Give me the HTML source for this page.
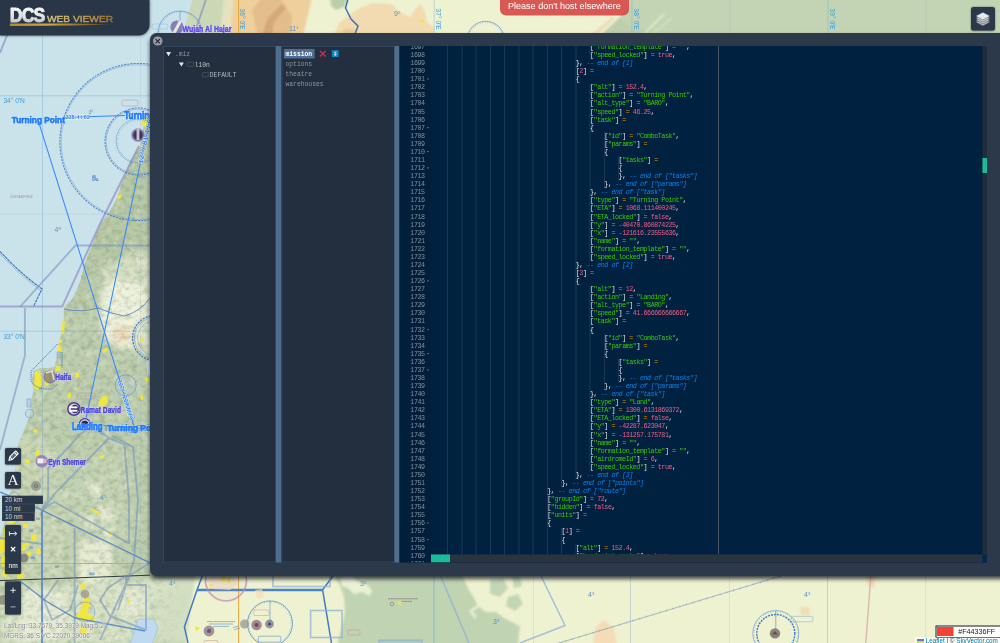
<!DOCTYPE html>
<html><head><meta charset="utf-8"><title>DCS Web Viewer</title>
<style>
*{box-sizing:border-box}
html,body{margin:0;padding:0}
#sc{position:absolute;left:0;top:0;width:2000px;height:1286px;transform:scale(.5);transform-origin:0 0}
#zm{position:absolute;left:0;top:0;width:2000px;height:1286px;overflow:hidden}
body{width:1000px;height:643px;overflow:hidden;position:relative;background:#cae3ea;font-family:"Liberation Sans",sans-serif}
#map{position:absolute;left:0;top:0;width:2000px;height:1286px}
.abs{position:absolute}
/* logo */
#logo{position:absolute;left:0;top:0;width:299.2px;height:71.2px;background:#283647;border-bottom-right-radius:22px;box-shadow:0 0 6px rgba(0,0,0,.45)}
#logo svg{position:absolute;left:0;top:0}
/* toast */
#toast{position:absolute;left:1000px;top:0;width:257.6px;height:30.8px;background:rgba(214,78,74,.93);border-radius:0 0 12px 12px;color:#fff;font-size:18.1px;line-height:24.8px;text-align:center;white-space:nowrap}
/* layers */
#layers{position:absolute;left:1942.4px;top:13.6px;width:47.6px;height:47px;background:#2a3849;border-radius:5px;box-shadow:0 0 4px rgba(0,0,0,.5)}
/* left controls */
.btn{position:absolute;left:10.4px;width:32px;background:#2a3849;border-radius:3px;box-shadow:0 0 4px rgba(0,0,0,.5);color:#fff}
.scale{position:absolute;left:3.8px;height:17.2px;background:#2a3849;color:#d8dce0;font-size:12.6px;line-height:16.8px;padding-left:5.2px;border:1px solid #3d4b5c;white-space:nowrap}
#coords{position:absolute;left:8px;top:1242px;font-size:12.84px;line-height:20px;color:#7d7d7d;text-shadow:0 0 2px #fff,0 0 2px #fff,0 0 4px #fff;white-space:nowrap}
/* modal */
#modal{position:absolute;left:300px;top:66px;width:1740px;height:1086px;background:#2b394a;border-radius:13px;box-shadow:0 6px 8px rgba(8,16,26,.78)}
#close svg,.btn svg,#layers svg,#files svg{display:block}
#close{position:absolute;left:6px;top:6.6px;width:18.8px;height:18.8px;border-radius:50%;background:#9b9ba3}
.panel{position:absolute;top:26px;height:1033px;background:#232f3e;border:2px solid #33465b}
#tree{left:26px;width:226px}
#files{left:263.2px;width:226.8px}
.split{position:absolute;top:26px;height:1033px;width:10.8px;background:#506e8e}
.mono{font-family:"Liberation Mono",monospace}
.tr{position:absolute;font-family:"Liberation Mono",monospace;font-size:12.7px;line-height:16px;color:#88929c;white-space:pre}
.fd{display:inline-block;width:11.2px;height:8.4px;border:1.2px solid #5a6673;border-radius:1.2px;vertical-align:-0.6px;margin-right:1.2px}
/* editor */
#ed{position:absolute;left:499.2px;top:26px;width:1174.8px;height:1033px;background:#002240;overflow:hidden;font-family:"Liberation Mono",monospace;font-size:13.4px;letter-spacing:-0.91px;line-height:16.15px;color:#e6eaf0}
#gut{position:absolute;left:0;top:0;width:63.2px;height:1033px;background:#011e3a;color:#8091a0;overflow:hidden}
.gl{position:absolute;left:0;width:50px;text-align:right;white-space:pre;height:16.15px}
.gl i{position:absolute;left:55px;top:6.2px;width:0;height:0;border-left:2.9px solid transparent;border-right:2.9px solid transparent;border-top:3.8px solid #76879a}
#code{position:absolute;left:0;top:0;width:1165.4px;height:1016.8px;overflow:hidden}
#gut{z-index:2}
.cl{position:absolute;white-space:pre;height:16.15px}
.ig{position:absolute;width:2px;background:rgba(255,255,255,.1)}
.k{color:#ee9205}.s{color:#37cb05}.n{color:#ee5d86}.c{color:#0682f2;font-style:italic}
#pm{position:absolute;left:636.6px;top:0;width:2px;height:1016.8px;background:#4d5560}
#vs{position:absolute;left:1165.4px;top:0;width:9.4px;height:1018.8px;background:#1f2d3d}
#vs b{position:absolute;left:0;top:224px;width:9.4px;height:30px;background:#1abc9c}
#hs{position:absolute;left:63.2px;top:1017.2px;width:1102.2px;height:15.8px;background:#29343f}
#hs b{position:absolute;left:0;top:0;width:37.6px;height:15.8px;background:#1abc9c}
#corner{position:absolute;left:1165.4px;top:1018.8px;width:9.4px;height:14.2px;background:#002a52}
/* bottom right */
#cp{position:absolute;left:1871.2px;top:1250.8px;width:132px;height:24.8px;background:#fff;border:2.4px solid #161616}
#cp b{position:absolute;left:1.2px;top:1.2px;width:32.4px;height:18px;background:#f44336}
#cp span{position:absolute;left:43.2px;top:0;font-size:14.3px;line-height:20.4px;color:#222}
#attr{position:absolute;left:1829px;top:1275.2px;width:172px;height:12px;background:rgba(255,255,255,.8);font-size:12.6px;line-height:14px;color:#333;white-space:nowrap;padding-left:5px;overflow:hidden}
#attr a{color:#0078a8;text-decoration:none}

</style></head>
<body>
<div id="sc">
<svg id="map" width="2000" height="1286" viewBox="0 0 1000 643">
<defs>
<filter id="b1" x="-5%" y="-5%" width="110%" height="110%"><feGaussianBlur stdDeviation="1.2"/></filter>
<filter id="b2" x="-10%" y="-10%" width="120%" height="120%"><feGaussianBlur stdDeviation="2.5"/></filter>
<filter id="b05" x="-5%" y="-5%" width="110%" height="110%"><feGaussianBlur stdDeviation=".5"/></filter>
<filter id="tex" x="0" y="0" width="100%" height="100%" color-interpolation-filters="sRGB"><feTurbulence type="fractalNoise" baseFrequency=".16 .2" numOctaves="3" seed="7"/><feColorMatrix type="matrix" values="0 0 0 0 .38  0 0 0 0 .47  0 0 0 0 .35  .7 0 0 0 -.3"/></filter>
<filter id="tex2" x="0" y="0" width="100%" height="100%" color-interpolation-filters="sRGB"><feTurbulence type="fractalNoise" baseFrequency=".14 .1" numOctaves="3" seed="21"/><feColorMatrix type="matrix" values="0 0 0 0 1  0 0 0 0 1  0 0 0 0 .9  .8 0 0 0 -.4"/></filter>
<linearGradient id="fade" gradientUnits="userSpaceOnUse" x1="140" y1="0" x2="190" y2="0"><stop offset="0" stop-color="#fff"/><stop offset="1" stop-color="#000"/></linearGradient><mask id="mk" maskUnits="userSpaceOnUse" x="0" y="0" width="200" height="643"><rect width="200" height="643" fill="url(#fade)"/></mask>
<clipPath id="cv"><rect width="1000" height="643"/></clipPath>
</defs>
<g clip-path="url(#cv)">
<!-- base land -->
<rect width="1000" height="643" fill="#bdcdae"/>

<!-- ===== terrain: left strip ===== -->
<g filter="url(#b2)">
<path d="M150 110 L150 250 L100 262 L84 300 L60 310 L100 220 L136 146Z" fill="#b7c8a6"/>
<path d="M104 270 L135 250 L150 255 L150 352 L132 352 L112 346 L98 330 L100 295Z" fill="#d6dec2"/>
<path d="M104 288 L114 280 L140 283 L148 300 L141 318 L139 345 L118 347 L105 338 L101 318Z" fill="#eef1dc"/>
<path d="M110 324 L132 324 L134 342 L116 344Z" fill="#efe6cc"/>
<path d="M116 330 L126 328 L128 340 L118 341Z" fill="#f0d8b4"/>
<path d="M60 470 L100 450 L128 456 L132 520 L120 585 L96 600 L74 580 L62 520Z" fill="#c3d2b2"/>
<path d="M88 484 L98 482 L104 492 L100 498 L92 494Z M96 505 L112 508 L116 520 L104 522Z M84 515 L96 518 L94 530 L86 528Z M104 524 L116 528 L112 540 L102 538Z M80 540 L110 542 L112 578 L96 590 L78 580Z" fill="#e6ebd2"/>
<path d="M0 576 L60 585 L150 580 L200 576 L200 643 L0 643Z" fill="#d9e2c6"/>
<path d="M20 430 L48 440 L62 480 L66 540 L60 590 L0 600 L0 540 L8 500 L14 470Z" fill="#c8d5b4"/>
<path d="M26 588 L60 590 L70 620 L56 643 L16 643 Z" fill="#e6ebd4"/><path d="M112 590 L140 586 L150 610 L132 618 L116 610Z" fill="#e2e9d0"/>
<path d="M150 600 L195 576 L205 600 L185 643 L150 643Z" fill="#d3dfc2"/>
</g>

<!-- ===== terrain: top strip ===== -->
<g filter="url(#b1)">
<path d="M193 -2 L230 -2 L224 36 L181 36Z" fill="#cbd8b6"/>
<path d="M224 -2 L240 -2 L236 36 L220 36Z" fill="#e6e2bd"/>
<path d="M234 -2 L314 -2 L304 36 L230 36Z" fill="#efcf9c"/>
<path d="M252 10 L262 -2 L280 -2 L292 16 L290 36 L258 36Z" fill="#e3bd8a"/><path d="M262 36 L268 18 L282 4 L286 8 L274 22 L272 36Z" fill="#d4a878"/>
<path d="M312 -2 L640 -2 L600 36 L303 36Z" fill="#eef2d0"/>
<path d="M330 -2 L348 -2 L344 7 L336 10 L331 6Z" fill="#bccfa8"/>
<path d="M333 36 L340 22 L358 9 L372 3 L392 4 L398 11 L410 17 L416 8 L421 4 L425 12 L427 22 L434 28 L434 36Z" fill="#f2dbb0"/>
<path d="M340 36 L346 28 L356 30 L354 36Z" fill="#eccb9a"/>
<path d="M629 -2 L1002 -2 L1002 36 L647 36 L651 28 L640 30 L629 26 L621 20 L622 12 L626 6Z" fill="#c2d4b3"/>
<path d="M644 34 L664 14" stroke="#e9efd2" stroke-width="1.6" fill="none"/><path d="M652 34 L672 18" stroke="#d9e4c4" stroke-width="1.2" fill="none"/>
<path d="M590 35 L612 17 L615 19 L596 36Z" fill="#ecdcb6"/>
</g>

<!-- ===== terrain: bottom strip ===== -->
<g filter="url(#b1)">
<path d="M196 574 L1002 574 L1002 645 L186 645 L190 610Z" fill="#eef2d0"/>
<path d="M334 574 L462 574 L468 588 L474 598 L478 606 L486 612 L496 612 L504 618 L512 622 L520 626 L518 645 L337 645 L342 626 L345 612 L344 598 L341 588Z" fill="#c1d4b2"/>
<path d="M340 577 L352 576 L358 582 L366 584 L372 590 L370 596 L362 592 L354 594 L348 588 L342 586Z" fill="#eaf0d4"/>
<path d="M490 580 L503 578 L508 588 L500 597 L490 594Z M508 597 L518 594 L523 604 L515 611 L506 606Z M512 576 L520 576 L522 586 L514 588Z" fill="#c3d5b4"/>
<path d="M478 606 L471 611 L475 617" fill="none" stroke="#eaf0d4" stroke-width="2.5" stroke-linecap="round"/>
<path d="M595 628 L604 620 L614 628 L617 645 L593 645Z" fill="#f4dcb6"/>
<path d="M866 576 L876 576 L874 588 L868 586Z" fill="#f3dbb4"/>
<path d="M800 607 L809 607 L810 615 L801 615Z" fill="#f3dbb4"/>
</g>

<g mask="url(#mk)"><rect width="200" height="643" filter="url(#tex)"/><rect width="200" height="643" filter="url(#tex2)"/></g>
<!-- sea -->
<path d="M-2 -2 L193 -2 L188 16 L183 34 L165 80 L150 118 L144 124 L140 146 L135.5 152 L130.6 160 L121 185 L117 198 L108 214 L99.5 225 L92 245 L84 265 L80 282 L73 298 L66 305 L63.8 309 L63.8 320 L61 335 L59 343 L58 352 L56 360 L54.4 367 L48 368 L40 368 L33.4 371 L32 380 L33.4 390 L31 405 L30 415 L24 430 L18.7 443 L16 455 L15.5 466 L13 480 L9 500 L5 520 L2 532 L-2 540Z" fill="#cae3ea" filter="url(#b05)"/>
<!-- lakes -->
<path d="M146.4 362 L150 358 L150 376 L147.4 374Z" fill="#cae3ea"/>
<path d="M138 619 L154 619 L158 628 L152 645 L130 645 L134 632Z" fill="#bfdaf0" stroke="#8fb4d8" stroke-width=".5"/>

<!-- river top -->
<path d="M348 -1 L345.5 8 L351 19 L358 26 L355 34" fill="none" stroke="#3c6fb2" stroke-width="1.5" stroke-linejoin="round"/>
<!-- litani river -->
<path d="M64 309 Q80 313 98 308 Q112 314 124 316 Q140 312 150 298" fill="none" stroke="#5583bb" stroke-width="1" opacity=".85"/>

<!-- urban yellow -->
<g fill="#f1e73c">
<path d="M141 119.5 L146 117.5 L150 116 L150 128 L145 127 L142 124Z"/>
<path d="M117 196 L122 194 L121 198 L118 199Z"/>
<path d="M62 321 L65 321 L64 333 L61.5 335Z"/>
<path d="M59 340 L62 340 L62 343 L59 343Z"/>
<path d="M58 346 L61 345 L62 352 L58 353Z"/>
<path d="M35 372 L40 371 L42 385 L38 390 L34 388Z"/>
<path d="M44 374 L48 374 L50 384 L46 386Z"/>
<path d="M56 367 L61 366 L60 371 L55 372Z"/>
<path d="M75 373 L78 372 L79.5 377 L76 378Z"/>
<path d="M68 394 L71 392 L71 397 L67 398Z"/>
<path d="M102 350 L108 347 L107 351 L103 353Z"/>
<path d="M100 400 L103 396 L107 396 L108 402 L104 406 L98 406Z"/>
<path d="M140 339 L144 338 L143 342 L140 342Z"/>
<path d="M145 378 L148 377 L149 381 L146 382Z"/>
<path d="M140 396 L143 396 L143 400 L140 399Z"/>
<path d="M34 429 L37 430 L37 433 L34 432Z"/>
<path d="M35 453 L38 449 L40 455 L35 456Z"/>
<path d="M25 459 L30 460 L29 463 L26 463Z"/>
<path d="M99 456 L104 455 L104 458 L101 459Z"/>
<path d="M92 509 L100 512 L99 514.5 L92 511Z"/>
<path d="M108 532 L112 531 L112 535 L109 535Z"/>
<path d="M31 535 L36 534 L37 540 L32 541Z"/>
<path d="M26 541 L29 541 L29 546 L26 546Z"/>
<path d="M23 524 L28 524 L28 528 L23 528Z"/>
<path d="M0 540 L5 540 L5 552 L0 553Z"/>
<path d="M3 570 L8 572 L7 577 L2 576Z"/>
<path d="M18 572 L24 573 L22 579 L17 578Z"/>
<path d="M80 585 L85 583 L86 588 L81 590Z"/>
<path d="M84 598 L89 597 L90 606 L86 612 L95 618 L94 622 L78 620 L75 616 L80 612Z"/>
<path d="M80 628 L86 628 L87 633 L81 633Z"/>
<path d="M127 600 L130 600 L130 603 L127 603Z"/>
<path d="M195 626 L200 628 L196 631Z"/>
<path d="M8 518 L14 517 L15 523 L9 524Z"/><path d="M14 526 L20 525 L21 531 L15 532Z"/><path d="M4 528 L9 528 L10 540 L4 541Z"/><path d="M20 545 L25 544 L26 550 L21 551Z"/><path d="M10 556 L16 555 L16 561 L11 562Z"/><path d="M2 556 L7 556 L8 566 L2 567Z"/><path d="M27 551 L31 551 L31 556 L27 556Z"/><path d="M14 568 L19 567 L20 572 L15 573Z"/><path d="M36 549 L40 548 L41 553 L37 554Z"/>
<path d="M420 20 L423 19 L424 22 L421 23Z"/>
<path d="M397 601 L400 601.5 L401.5 605 L399 604.5Z"/>
</g>

<!-- graticule -->
<g stroke="#6fa6cf" stroke-width=".6" fill="none" opacity=".62">
<path d="M42.5 36 V643"/>
<path d="M0 95.8 H150"/>
<path d="M0 331.2 H150"/>
<path d="M434.2 0 V33 M434.5 576 V643"/>
<path d="M632 0 V33 M630.4 576 V643"/>
<path d="M828 0 V33 M827.5 576 V643"/>
</g>
<g stroke="#8fa8b8" stroke-width=".5" fill="none" opacity=".42">
<path d="M0 214 H150"/>
<path d="M140.5 36 V560"/>
<path d="M730 0 V33 M926 0 V33 M729.4 576 V643 M925.6 576 V643 M533.5 576 V643"/>
</g>
<path d="M238.6 0 V33 M238.6 576 V643" stroke="#e8a535" stroke-width="1" fill="none"/>
<path d="M0 563.5 H150" stroke="#e8a535" stroke-width="1" fill="none"/>
<path d="M0 580.6 L150 575.2" stroke="#2f3a44" stroke-width="1" fill="none"/>

<!-- graticule labels -->
<g font-family="Liberation Sans" font-size="6.6" fill="#3a9be0">
<text x="3.4" y="103">34° 0'N</text>
<text x="3.4" y="338.6">33° 0'N</text>
<text transform="translate(240.4 8.6) rotate(90)">36° 0'E</text>
<text transform="translate(436 8.6) rotate(90)">37° 0'E</text>
<text transform="translate(633.8 8.6) rotate(90)">38° 0'E</text>
<text transform="translate(829.6 8.6) rotate(90)">39° 0'E</text>
</g>

<!-- border purple -->
<g fill="none" stroke="#958fc6" stroke-width="2" opacity=".72">
<path d="M7.5 34 L0 53"/>
<path d="M205.8 0 L194.6 33"/>
<path d="M139 146 L99.5 225 L62.2 306.6 L0 306.6"/>
</g>

<!-- airspace: dashed circles -->
<g fill="none" stroke="#3f78c4" stroke-width="1.05" stroke-dasharray="2.2 1" opacity=".85">
<circle cx="138.5" cy="142" r="78.6"/>
<circle cx="138.5" cy="141.5" r="33.5"/>
</g>
<g fill="none" stroke="#6b9ad6" stroke-width=".6">
<circle cx="138.5" cy="142" r="77.3" opacity=".8"/>
<circle cx="138.5" cy="141.5" r="32.3" opacity=".8"/>
<circle cx="138" cy="141" r="22"/>
<circle cx="142" cy="166" r="11" opacity=".7"/>
</g>
<!-- haifa dashed -->
<path d="M57.5 344 L31 371.3 L31 381 Q36 390 52 389 L58 384" fill="none" stroke="#3f78c4" stroke-width=".9" stroke-dasharray="1.6 .8"/>
<path d="M62 352 L62 366" fill="none" stroke="#3f78c4" stroke-width=".9" stroke-dasharray="1.6 .8"/>
<!-- ticked line in sea -->
<path d="M0 251.4 Q22 275 42 288.8 L33.4 306.6" fill="none" stroke="#3f6fc0" stroke-width="1.1" stroke-dasharray="3 .6"/>
<path d="M0 254 Q22 277 40 290" fill="none" stroke="#7fa4d6" stroke-width=".6"/>
<!-- right-side circle arcs -->
<g fill="none" stroke="#3f78c4">
<circle cx="155.2" cy="338" r="22.6" stroke-width="1.2" stroke-dasharray="2.2 1"/>
<circle cx="155.2" cy="338" r="20.8" stroke-width=".5" opacity=".8"/>
<circle cx="155.2" cy="338" r="17.6" stroke-width=".5" opacity=".6"/>
</g>
<!-- airspace polygons light -->
<g fill="none" stroke="#6f90be" stroke-width="1.9" opacity=".55" stroke-linejoin="round">
<path d="M150 245.5 H75.4 L20.2 306.6"/>
<path d="M24.9 308 V355.8 L7.8 420 L0 450"/>
<path d="M79 435 L68.4 447.7 L48.2 468 L48 500 L42 509"/>
<path d="M109 438 L54.4 494 L40 515"/>
<path d="M109 438 L124.4 444.5 L129 500 L129 543.3 L54.4 502 L42 509"/>
<path d="M112 436 L133 447 L138 500 L134 560 L118 610"/>
<path d="M79 435 L92 426 L109 438"/>
<path d="M74.6 527.8 V643"/>
<path d="M0 538 L42 544"/>
<path d="M126 576 L126 585 L146 585 L146 630 L110 616 L100 600 L108 588 L126 576"/>
<path d="M58 580 L44 600 L52 620 L70 610 L78 585"/>
<path d="M150 563 L130 575 L100 640"/>
</g>
<g fill="none" stroke="#4f82c6" stroke-width="1.4" opacity=".85">
<path d="M35 506.8 L150 562.8"/>
<path d="M42 511 V643" stroke-width="1.8"/>
<path d="M0 492 L35 506.8"/>
<path d="M20 581 L46 601 L75 618 L145 631"/>
</g>
<path d="M125.7 385.3 m-10.5 0 a10.5 10.5 0 1 0 21 0 a10.5 10.5 0 1 0 -21 0" fill="#b8cce0" fill-opacity=".25" stroke="#6f98c8" stroke-width=".8"/>
<circle cx="32" cy="505" r="6" fill="none" stroke="#7d9fcc" stroke-width=".7"/>
<rect x="27" y="399" width="4" height="8" fill="#a8c0d4" fill-opacity=".5" stroke="#7d9fcc" stroke-width=".6"/><circle cx="29.5" cy="413.5" r="4.2" fill="#b8d0e0" fill-opacity=".4" stroke="#7d9fcc" stroke-width=".7"/><rect x="57" y="352" width="3.6" height="6" fill="#9fb8c8" fill-opacity=".6" stroke="#7d9fcc" stroke-width=".5"/>
<circle cx="14" cy="497" r="5" fill="none" stroke="#7d9fcc" stroke-width=".7"/>

<!-- bottom strip airspace -->
<g fill="none" stroke="#427cc4" stroke-width="1.5" stroke-linejoin="round">
<path d="M334.5 574 L322.6 589.8 L331.8 645"/>
<path d="M203 574 L197 590 L184.4 627 L188.5 645"/>
<path d="M197 590 H322.6" stroke-width="2.4" stroke="#4a82c6"/>
</g>
<g fill="none" stroke="#8fb0d8" stroke-width="1.6" opacity=".75">
<rect x="273" y="570" width="57" height="16.5"/>
<rect x="310.6" y="610.5" width="31.4" height="27"/>
<rect x="379" y="640.2" width="43" height="6" fill="#a5c4b4" fill-opacity=".9"/>
<path d="M440.5 576 L469 643"/>
<path d="M541 576 L565 625.5 L520 643"/>
<path d="M433.5 576 V643" stroke-width=".6"/>
</g>
<path d="M206 578 L214 576 L232 577 L238 584 L230 590 L212 589Z" fill="#f3dcbc" opacity=".7" filter="url(#b05)"/><path d="M255 590 L262 589 L264 597 L257 599Z" fill="#f3dcbc" opacity=".7" filter="url(#b05)"/><path d="M221 576 L226 576 L225 581 L221 582Z M227 577 L231 577 L230 583 L227 582Z M209 584 L212 584 L211 588Z" fill="#f1e73c"/>
<circle cx="226" cy="580.4" r="20.5" fill="#d9a0c0" fill-opacity=".1" stroke="#c08ab4" stroke-width="1.8" opacity=".7"/>
<g fill="none" stroke="#5a8fd0">
<circle cx="270" cy="623.4" r="22.5" stroke-width=".8"/>
<circle cx="180" cy="33" r="22" stroke-width=".7"/>
<circle cx="485.7" cy="40" r="18.7" stroke-width=".7"/>
<circle cx="775.8" cy="633.5" r="23" stroke-width=".6"/>
<circle cx="775.8" cy="633.5" r="19" stroke-width="1.4" stroke-dasharray="2 1" stroke="#3f78c4"/>
<circle cx="85" cy="612" r="10" stroke-width=".7" opacity=".7"/>
</g>
<path d="M180 11 V33 M270 601 V623" stroke="#5a8fd0" stroke-width=".6"/>
<g fill="none" stroke="#5a8fd0" stroke-width="1.8" stroke-dasharray=".35 2.2" opacity=".8"><circle cx="270" cy="623.4" r="21.4"/><circle cx="180" cy="33" r="20.9"/><circle cx="485.7" cy="40" r="17.6"/><circle cx="775.8" cy="633.5" r="21.9"/><circle cx="138.5" cy="141.5" r="21"/></g>
<path d="M775.8 611 V632" stroke="#666" stroke-width=".5"/>
<!-- railway -->
<path d="M559 643 L781 576" fill="none" stroke="#7f9fc0" stroke-width=".7"/>
<path d="M559 643 L781 576" fill="none" stroke="#7f9fc0" stroke-width="2.2" stroke-dasharray=".5 6.5" opacity=".8"/>
<path d="M870.8 576 L865.8 643" stroke="#dcb6b4" stroke-width="1.4" fill="none"/>

<!-- VOR symbols -->
<g>
<circle cx="209" cy="631" r="5.4" fill="#8d7a8c" opacity=".8"/><circle cx="209" cy="631" r="2" fill="#6a5468"/>
<circle cx="256.6" cy="625" r="5.2" fill="#8d7080" opacity=".8"/><circle cx="256.6" cy="625" r="2" fill="#6a4860"/>
<circle cx="244.6" cy="624" r="4.6" fill="#9a9c98" opacity=".8"/>
<circle cx="269.5" cy="624" r="4.4" fill="#7f7a90" opacity=".8"/><circle cx="269.5" cy="624" r="1.6" fill="#4a4870"/>
<circle cx="775" cy="633.4" r="5.2" fill="#8a8478"/><path d="M772 634.5 L775 631 L778 634.5Z" fill="#7a4450"/>
<circle cx="36" cy="486" r="5" fill="#8c8c84" opacity=".75"/><circle cx="36" cy="486" r="1.6" fill="none" stroke="#555" stroke-width=".5"/>
<circle cx="24" cy="558" r="4.5" fill="#6c6c64" opacity=".7"/>
<circle cx="3" cy="600" r="5" fill="#77776f" opacity=".7"/>
<circle cx="85" cy="594" r="4.4" fill="#9a9a90" opacity=".8"/>
<circle cx="392" cy="604" r="1.9" fill="none" stroke="#7a5a84" stroke-width=".5"/><path d="M388 598.8 H418 M402 601.4 H412" stroke="#7a4a7a" stroke-width=".9" stroke-dasharray="2.2 .5" opacity=".65" fill="none"/>
</g>

<!-- small labels -->
<g font-family="Liberation Sans" font-size="7" fill="#5f8fc4">
<text x="54.5" y="231.6">4<tspan font-size="4.4" dy="-2">9</tspan></text>
<text x="88.5" y="113.6" font-size="5">3<tspan font-size="3.4" dy="-1.4">5</tspan></text>
<text x="100" y="500">4<tspan font-size="4.4" dy="-2">1</tspan></text>
<text x="169" y="585.6">4<tspan font-size="4.4" dy="-2">4</tspan></text>
<text x="360" y="585.6">3<tspan font-size="4.4" dy="-2">6</tspan></text>
<text x="493" y="623.6">3<tspan font-size="4.4" dy="-2">3</tspan></text>
<text x="588" y="596.6">4<tspan font-size="4.4" dy="-2">3</tspan></text>
<text x="804" y="596.6">4<tspan font-size="4.4" dy="-2">3</tspan></text>
<text x="289" y="31.4">11<tspan font-size="4.4" dy="-2">1</tspan></text>
<text x="394" y="16">9<tspan font-size="4.4" dy="-2">5</tspan></text>
</g>
<g fill="none" stroke="#b87a94" stroke-width=".5" opacity=".8">
<rect x="122" y="100" width="16" height="6" rx="1.5"/>
<rect x="77" y="393" width="18" height="6" rx="1"/>
<rect x="253.8" y="610" width="15.2" height="5.5" rx="1"/><rect x="204" y="640.6" width="14" height="5" rx="1"/>
<rect x="348" y="630" width="12" height="5" rx="1"/>
</g>
<rect x="791" y="616.4" width="22" height="5.4" rx="1.4" fill="none" stroke="#7ea6d2" stroke-width=".5"/>
<rect x="258.3" y="636.2" width="22.5" height="6" rx="1.4" fill="#eef2d0" stroke="#5a8fd0" stroke-width=".6"/>
<path d="M207 621.6 H235 M209 624 H233 M213 626.4 H229 M233 627.5 L239 626 M234 629.5 L240 628" stroke="#5a8fd0" stroke-width=".8" opacity=".75" fill="none"/>
<rect x="152" y="24" width="16" height="5" rx="2" fill="none" stroke="#8fb4dc" stroke-width=".5"/>
<g fill="#a0688c" font-family="Liberation Sans" font-size="2.6" opacity=".8">
<text x="10" y="197.6">OLIM TASKFORCE</text>

</g>
<g fill="#4079c2" font-family="Liberation Sans" font-size="3.4" font-weight="bold">
<text x="92" y="178">46</text><text x="92" y="181.4">UNL</text>
<text x="29" y="532">##</text><text x="29" y="549">##</text><text x="31" y="559">##</text><text x="55" y="568">##</text><text x="89" y="575">###</text><text x="36" y="520">##</text>
</g>

<!-- ===== route (leaflet) ===== -->
<g fill="none" stroke="#3388ff" stroke-width="1.05" stroke-linecap="round">
<path d="M64.5 117.6 L124.5 115.4"/>
<path d="M37.6 118.6 L134.3 427"/>
<path d="M150.6 114.5 L84.8 424.3"/>
</g>
<path d="M131 416.6 L134.6 416 L133.4 420.4Z" fill="#fff" stroke="#3388ff" stroke-width=".5"/>

<!-- airport markers -->
<g>
<circle cx="138" cy="135" r="6.6" fill="#6a5a8c" opacity=".85"/><circle cx="138" cy="135" r="4.6" fill="#3c3560"/><rect x="136.6" y="128" width="2.8" height="12" fill="#c9c9c9"/><circle cx="138" cy="135" r="6.4" fill="none" stroke="#b0a4d4" stroke-width=".8"/>
<circle cx="177" cy="27" r="6.6" fill="#7a6cb0" opacity=".85"/><path d="M174 33 L180.5 21" stroke="#e8e8dc" stroke-width="3"/>
<circle cx="50" cy="377" r="6.2" fill="#8a7a6c" opacity=".75"/><circle cx="50" cy="377" r="6" fill="none" stroke="#7a6cc0" stroke-width="1"/><path d="M46 373 L52 371 L54 380" stroke="#e4e0d0" stroke-width="1.6" fill="none"/>
<circle cx="74" cy="409" r="7.2" fill="#d8d4ec" opacity=".9"/><circle cx="74" cy="409" r="6.2" fill="none" stroke="#4a3c8c" stroke-width="1.5"/><circle cx="75" cy="409" r="4.2" fill="#3a2f70"/><rect x="69.4" y="406.4" width="8" height="1.9" fill="#fff"/><rect x="69.4" y="409.8" width="8" height="1.9" fill="#fff"/>
<circle cx="84.8" cy="424.3" r="6.8" fill="#cfc8e8" opacity=".9"/><circle cx="84.8" cy="424.3" r="5.6" fill="none" stroke="#4a3c8c" stroke-width="1.3"/><circle cx="84.8" cy="424.3" r="3.6" fill="#2a2450"/>
<circle cx="41.7" cy="461.3" r="6.2" fill="#8a74b8" opacity=".8"/><rect x="37.4" y="458.4" width="6" height="5" fill="#f0f0f4"/><rect x="43" y="459" width="3.4" height="4" fill="#e8b0c0"/>
</g>

<!-- map labels -->
<g font-family="Liberation Sans" font-weight="bold" stroke-linejoin="round">
<text x="11.8" y="122.8" font-size="9.7" fill="#fff" stroke="#fff" stroke-width="1.5" stroke-opacity=".5" fill-opacity=".5" textLength="53.1" lengthAdjust="spacingAndGlyphs">Turning Point</text>
<text x="124.2" y="119.2" font-size="10.4" fill="#fff" stroke="#fff" stroke-width="1.5" stroke-opacity=".5" fill-opacity=".5" textLength="53.1" lengthAdjust="spacingAndGlyphs">Turning Point</text>
<text x="71.9" y="430.4" font-size="10.6" fill="#fff" stroke="#fff" stroke-width="1.5" stroke-opacity=".5" fill-opacity=".5" textLength="30.8" lengthAdjust="spacingAndGlyphs">Landing</text>
<text x="107.3" y="431.2" font-size="9.9" fill="#fff" stroke="#fff" stroke-width="1.5" stroke-opacity=".5" fill-opacity=".5" textLength="54" lengthAdjust="spacingAndGlyphs">Turning Point</text>
<text x="182.6" y="32" font-size="8.9" fill="#fff" stroke="#fff" stroke-width="1.5" stroke-opacity=".5" fill-opacity=".5" textLength="48.8" lengthAdjust="spacingAndGlyphs">Wujah Al Hajar</text>
<text x="55.2" y="380.3" font-size="8.8" fill="#fff" stroke="#fff" stroke-width="1.5" stroke-opacity=".5" fill-opacity=".5" textLength="16" lengthAdjust="spacingAndGlyphs">Haifa</text>
<text x="80.6" y="413.4" font-size="8.9" fill="#fff" stroke="#fff" stroke-width="1.5" stroke-opacity=".5" fill-opacity=".5" textLength="40.4" lengthAdjust="spacingAndGlyphs">Ramat David</text>
<text x="48.2" y="465.1" font-size="8.6" fill="#fff" stroke="#fff" stroke-width="1.5" stroke-opacity=".5" fill-opacity=".5" textLength="37.6" lengthAdjust="spacingAndGlyphs">Eyn Shemer</text>
<text x="11.8" y="122.8" font-size="9.7" fill="#1e7cff" stroke="#1e7cff" stroke-width=".75" textLength="53.1" lengthAdjust="spacingAndGlyphs">Turning Point</text>
<text x="124.2" y="119.2" font-size="10.4" fill="#1e7cff" stroke="#1e7cff" stroke-width=".75" textLength="53.1" lengthAdjust="spacingAndGlyphs">Turning Point</text>
<text x="71.9" y="430.4" font-size="10.6" fill="#1e7cff" stroke="#1e7cff" stroke-width=".75" textLength="30.8" lengthAdjust="spacingAndGlyphs">Landing</text>
<text x="103.4" y="430.6" font-size="9.9" fill="#1e7cff" opacity=".55" textLength="54" lengthAdjust="spacingAndGlyphs">Turning Point</text>
<text x="107.3" y="431.2" font-size="9.9" fill="#1e7cff" stroke="#1e7cff" stroke-width=".75" textLength="54" lengthAdjust="spacingAndGlyphs">Turning Point</text>
<text x="182.6" y="32" font-size="8.9" fill="#5a4ae6" stroke="#5a4ae6" stroke-width=".5" textLength="48.8" lengthAdjust="spacingAndGlyphs">Wujah Al Hajar</text>
<text x="55.2" y="380.3" font-size="8.8" fill="#4c44de" stroke="#4c44de" stroke-width=".5" textLength="16" lengthAdjust="spacingAndGlyphs">Haifa</text>
<text x="80.6" y="413.4" font-size="8.9" fill="#4c44de" stroke="#4c44de" stroke-width=".5" textLength="40.4" lengthAdjust="spacingAndGlyphs">Ramat David</text>
<text x="48.2" y="465.1" font-size="8.6" fill="#4c44de" stroke="#4c44de" stroke-width=".5" textLength="37.6" lengthAdjust="spacingAndGlyphs">Eyn Shemer</text>
</g>
<g font-family="Liberation Sans" font-weight="bold" font-size="5.6" fill="#2a7cf0" stroke="#fff" stroke-width=".8" stroke-opacity=".8" style="paint-order:stroke">
<text x="65.4" y="119.2" textLength="24.6" lengthAdjust="spacingAndGlyphs">228.4 / 62</text>
<text transform="translate(117.4 380.7) rotate(72.6)" font-size="6.2" textLength="42" lengthAdjust="spacingAndGlyphs">137° / 23 NM / 8</text>
<text transform="translate(142.4 164) rotate(-78)" font-size="6.2" textLength="50" lengthAdjust="spacingAndGlyphs">12° / 81.4 / 60</text>
</g>
</g>
</svg>

<div id="zm">
<div id="logo">
<svg width="300" height="72" viewBox="0 0 150 36">
<defs>
<linearGradient id="lgS" x1="0" y1="0" x2="0" y2="1"><stop offset="0" stop-color="#ffffff"/><stop offset=".55" stop-color="#e3e5e8"/><stop offset="1" stop-color="#aeb2b8"/></linearGradient>
<linearGradient id="lgG" x1="0" y1="0" x2="1" y2="0"><stop offset="0" stop-color="#b48a2c"/><stop offset=".35" stop-color="#d8a838"/><stop offset=".8" stop-color="#9a7428" stop-opacity=".7"/><stop offset="1" stop-color="#8a6824" stop-opacity="0"/></linearGradient>
<linearGradient id="lgT" x1="0" y1="0" x2="1" y2="0"><stop offset="0" stop-color="#dcc88a"/><stop offset=".5" stop-color="#c9a45a"/><stop offset="1" stop-color="#9c7430"/></linearGradient>
</defs>
<text x="9.8" y="22.3" font-family="Liberation Sans" font-weight="bold" font-size="19.7" fill="url(#lgS)" stroke="url(#lgS)" stroke-width=".9" stroke-linejoin="round" textLength="34.6" lengthAdjust="spacingAndGlyphs" letter-spacing="-1">DCS</text>
<text x="46.9" y="22.4" font-family="Liberation Sans" font-size="8.9" fill="url(#lgT)" stroke="url(#lgT)" stroke-width=".35" textLength="66.2" lengthAdjust="spacingAndGlyphs">WEB VIEWER</text>
<path d="M9.9 23.6 L72 23.4 L116 24.6 L72 25.6 L9.9 26 Z" fill="url(#lgG)"/>
</svg>
</div>

<div id="toast">Please don't host elsewhere</div>

<div id="layers"><svg width="47.6" height="47" viewBox="0 0 23.8 23.5"><g stroke="#2a3849" stroke-width=".45"><path d="M11.9 11.2 L4.7 15.1 L11.9 19 L19.1 15.1Z" fill="#b9bdc3"/><path d="M11.9 9.2 L4.7 13.1 L11.9 17 L19.1 13.1Z" fill="#c6c9ce"/><path d="M11.9 7.2 L4.7 11.1 L11.9 15 L19.1 11.1Z" fill="#d0d3d7"/><path d="M11.9 5.2 L4.7 9.1 L11.9 13 L19.1 9.1Z" fill="#e6e8ea"/></g></svg></div>

<!-- left controls -->
<div class="btn" style="top:896px;height:33.2px"><svg width="32" height="33.2" viewBox="0 0 16 16.6"><g transform="rotate(45 8 8.3)" fill="none" stroke="#fff" stroke-width="1"><rect x="6.1" y="2.6" width="3.8" height="8.4" rx=".4" fill="#fff" fill-opacity=".25"/><path d="M6.1 11 L8 14 L9.9 11" fill="#fff" fill-opacity=".2"/><path d="M6.1 4.6 H9.9"/></g></svg></div>
<div class="btn" style="top:944px;height:33.2px"><div style="position:absolute;left:0;top:0;width:32px;text-align:center;font-family:'Liberation Serif',serif;font-size:27.2px;line-height:32.8px;color:#f2f3f4;transform:scaleX(1.14)">A</div></div>
<div class="scale" style="top:991.2px;width:82.4px">20 km</div>
<div class="scale" style="top:1008.2px;width:66.4px">10 mi</div>
<div class="scale" style="top:1025.2px;width:65.6px">10 nm</div>
<div class="btn" style="top:1050px;height:98px">
<svg width="32" height="98" viewBox="0 0 16 49"><g stroke="#fff" stroke-width=".9" fill="none"><path d="M4.4 6.4 V10.8 M4.4 8.6 H11.6 M9.6 6.6 L11.8 8.6 L9.6 10.6"/><path d="M6.0 22 L10.2 26.4 M10.2 22 L6.0 26.4" stroke-width="1.2"/></g><text x="8.1" y="43" font-family="Liberation Sans" font-size="6.6" fill="#fff" text-anchor="middle">nm</text></svg></div>
<div class="btn" style="top:1163.2px;height:65.6px">
<svg width="32" height="65.6" viewBox="0 0 16 32.8"><g stroke="#e4e6e8" stroke-width="1" fill="none"><path d="M5.4 8.8 H10.8 M8.1 6.1 V11.5"/><path d="M5.6 25.4 H10.6" stroke="#aab0b8"/></g></svg></div>
<div id="coords">Lat/Lng: 33.7679, 35.3979 Mag:5.2°<br>MGRS: 36 S YC 22070 39006</div>

<!-- modal -->
<div id="modal">
<div id="close"><svg width="18.8" height="18.8" viewBox="0 0 9.4 9.4"><path d="M2.5 2.5 L6.9 6.9 M6.9 2.5 L2.5 6.9" stroke="#222c38" stroke-width="1.1" fill="none"/></svg></div>
<div class="panel" id="tree">
<svg class="abs" style="left:0;top:0" width="222" height="120" viewBox="0 0 111 60" font-family="Liberation Mono" font-size="6.35">
<path d="M2.1 4.9 H7 L4.55 9.2Z M14.9 15.5 H19.9 L17.4 19.5Z" fill="#e4e7ea"/>
<rect x="23.2" y="15.2" width="6.4" height="4.2" rx=".7" fill="none" stroke="#566270" stroke-width=".6"/>
<rect x="38.5" y="25.6" width="6.4" height="4.2" rx=".7" fill="none" stroke="#566270" stroke-width=".6"/>
<text x="10.9" y="9.4" fill="#8e969f">.miz</text>
<text x="30.7" y="19.6" fill="#bcc2c8">l10n</text>
<text x="45.8" y="30" fill="#b4bac1">DEFAULT</text>
</svg>
</div>
<div class="split" style="left:252px"></div>
<div class="panel" id="files">
<svg class="abs" style="left:0;top:0" width="222" height="120" viewBox="0 0 111 60" font-family="Liberation Mono" font-size="6.35">
<rect x="1.4" y="1.9" width="30.7" height="9.6" fill="#4e6e94"/>
<text x="3" y="9.4" fill="#fff" font-weight="bold">mission</text>
<path d="M37.5 3.9 L43.1 9.5 M43.1 3.9 L37.5 9.5" stroke="#cf2a5c" stroke-width="1.35" fill="none"/>
<rect x="49.4" y="3.3" width="6.8" height="6.8" rx=".5" fill="#0b88cb"/>
<path d="M51.6 5.2 H54 M52.8 5.4 V8.4 M51.6 7 L52.8 8.5 L54 7" stroke="#e8eef2" stroke-width=".8" fill="none"/>
<text x="3" y="19.1" fill="#8e969f">options</text>
<text x="3" y="28.8" fill="#8e969f">theatre</text>
<text x="3" y="38.5" fill="#8e969f">warehouses</text>
</svg>
</div>
<div class="split" style="left:489.2px;width:10px"></div>
<div id="ed"><div id="gut"><div class="gl" style="top:-5.66px">1697</div><div class="gl" style="top:10.5px">1698</div><div class="gl" style="top:26.66px">1699</div><div class="gl" style="top:42.8px">1700</div><div class="gl" style="top:58.94px">1701<i></i></div><div class="gl" style="top:75.1px">1702</div><div class="gl" style="top:91.24px">1703</div><div class="gl" style="top:107.4px">1704</div><div class="gl" style="top:123.54px">1705</div><div class="gl" style="top:139.7px">1706</div><div class="gl" style="top:155.84px">1707<i></i></div><div class="gl" style="top:172px">1708</div><div class="gl" style="top:188.14px">1709</div><div class="gl" style="top:204.3px">1710<i></i></div><div class="gl" style="top:220.44px">1711</div><div class="gl" style="top:236.6px">1712<i></i></div><div class="gl" style="top:252.76px">1713</div><div class="gl" style="top:268.9px">1714</div><div class="gl" style="top:285.04px">1715</div><div class="gl" style="top:301.2px">1716</div><div class="gl" style="top:317.34px">1717</div><div class="gl" style="top:333.5px">1718</div><div class="gl" style="top:349.64px">1719</div><div class="gl" style="top:365.8px">1720</div><div class="gl" style="top:381.94px">1721</div><div class="gl" style="top:398.1px">1722</div><div class="gl" style="top:414.24px">1723</div><div class="gl" style="top:430.4px">1724</div><div class="gl" style="top:446.54px">1725</div><div class="gl" style="top:462.7px">1726<i></i></div><div class="gl" style="top:478.84px">1727</div><div class="gl" style="top:495px">1728</div><div class="gl" style="top:511.14px">1729</div><div class="gl" style="top:527.3px">1730</div><div class="gl" style="top:543.44px">1731</div><div class="gl" style="top:559.6px">1732<i></i></div><div class="gl" style="top:575.76px">1733</div><div class="gl" style="top:591.9px">1734</div><div class="gl" style="top:608.04px">1735<i></i></div><div class="gl" style="top:624.2px">1736</div><div class="gl" style="top:640.34px">1737<i></i></div><div class="gl" style="top:656.5px">1738</div><div class="gl" style="top:672.64px">1739</div><div class="gl" style="top:688.8px">1740</div><div class="gl" style="top:704.94px">1741</div><div class="gl" style="top:721.1px">1742</div><div class="gl" style="top:737.24px">1743</div><div class="gl" style="top:753.4px">1744</div><div class="gl" style="top:769.54px">1745</div><div class="gl" style="top:785.7px">1746</div><div class="gl" style="top:801.84px">1747</div><div class="gl" style="top:818px">1748</div><div class="gl" style="top:834.14px">1749</div><div class="gl" style="top:850.3px">1750</div><div class="gl" style="top:866.44px">1751</div><div class="gl" style="top:882.6px">1752</div><div class="gl" style="top:898.74px">1753</div><div class="gl" style="top:914.9px">1754</div><div class="gl" style="top:931.04px">1755</div><div class="gl" style="top:947.2px">1756<i></i></div><div class="gl" style="top:963.34px">1757</div><div class="gl" style="top:979.5px">1758<i></i></div><div class="gl" style="top:995.64px">1759</div><div class="gl" style="top:1011.8px">1760</div><div class="gl" style="top:1027.94px">1761</div></div><div id="code"><div class="ig" style="left:95.02px;top:-5.66px;height:1049.76px"></div><div class="ig" style="left:123.54px;top:-5.66px;height:1049.76px"></div><div class="ig" style="left:152.06px;top:-5.66px;height:1049.76px"></div><div class="ig" style="left:180.58px;top:-5.66px;height:1049.76px"></div><div class="ig" style="left:209.1px;top:-5.66px;height:1049.76px"></div><div class="ig" style="left:237.62px;top:-5.66px;height:1049.76px"></div><div class="ig" style="left:266.14px;top:-5.66px;height:1049.76px"></div><div class="ig" style="left:294.66px;top:-5.66px;height:1049.76px"></div><div class="ig" style="left:323.18px;top:-5.66px;height:888.24px"></div><div class="ig" style="left:323.18px;top:963.34px;height:80.76px"></div><div class="ig" style="left:351.7px;top:-5.66px;height:872.1px"></div><div class="ig" style="left:351.7px;top:995.64px;height:48.46px"></div><div class="ig" style="left:380.22px;top:-5.66px;height:32.3px"></div><div class="ig" style="left:380.22px;top:75.1px;height:355.3px"></div><div class="ig" style="left:380.22px;top:478.84px;height:371.46px"></div><div class="ig" style="left:408.74px;top:172px;height:113.04px"></div><div class="ig" style="left:408.74px;top:575.76px;height:113.04px"></div><div class="ig" style="left:437.26px;top:220.44px;height:48.44px"></div><div class="ig" style="left:437.26px;top:624.2px;height:48.46px"></div><div class="cl" style="top:-5.66px;left:380.92px">[<span class="s">"formation_template"</span>] <span class="k">=</span> <span class="s">""</span>,</div><div class="cl" style="top:10.5px;left:380.92px">[<span class="s">"speed_locked"</span>] <span class="k">=</span> <span class="n">true</span>,</div><div class="cl" style="top:26.66px;left:352.4px">}, <span class="c">-- end of [1]</span></div><div class="cl" style="top:42.8px;left:352.4px">[<span class="n">2</span>] <span class="k">=</span></div><div class="cl" style="top:58.94px;left:352.4px">{</div><div class="cl" style="top:75.1px;left:380.92px">[<span class="s">"alt"</span>] <span class="k">=</span> <span class="n">152.4</span>,</div><div class="cl" style="top:91.24px;left:380.92px">[<span class="s">"action"</span>] <span class="k">=</span> <span class="s">"Turning Point"</span>,</div><div class="cl" style="top:107.4px;left:380.92px">[<span class="s">"alt_type"</span>] <span class="k">=</span> <span class="s">"BARO"</span>,</div><div class="cl" style="top:123.54px;left:380.92px">[<span class="s">"speed"</span>] <span class="k">=</span> <span class="n">46.25</span>,</div><div class="cl" style="top:139.7px;left:380.92px">[<span class="s">"task"</span>] <span class="k">=</span></div><div class="cl" style="top:155.84px;left:380.92px">{</div><div class="cl" style="top:172px;left:409.44px">[<span class="s">"id"</span>] <span class="k">=</span> <span class="s">"ComboTask"</span>,</div><div class="cl" style="top:188.14px;left:409.44px">[<span class="s">"params"</span>] <span class="k">=</span></div><div class="cl" style="top:204.3px;left:409.44px">{</div><div class="cl" style="top:220.44px;left:437.96px">[<span class="s">"tasks"</span>] <span class="k">=</span></div><div class="cl" style="top:236.6px;left:437.96px">{</div><div class="cl" style="top:252.76px;left:437.96px">}, <span class="c">-- end of ["tasks"]</span></div><div class="cl" style="top:268.9px;left:409.44px">}, <span class="c">-- end of ["params"]</span></div><div class="cl" style="top:285.04px;left:380.92px">}, <span class="c">-- end of ["task"]</span></div><div class="cl" style="top:301.2px;left:380.92px">[<span class="s">"type"</span>] <span class="k">=</span> <span class="s">"Turning Point"</span>,</div><div class="cl" style="top:317.34px;left:380.92px">[<span class="s">"ETA"</span>] <span class="k">=</span> <span class="n">1068.111400245</span>,</div><div class="cl" style="top:333.5px;left:380.92px">[<span class="s">"ETA_locked"</span>] <span class="k">=</span> <span class="n">false</span>,</div><div class="cl" style="top:349.64px;left:380.92px">[<span class="s">"y"</span>] <span class="k">=</span> <span class="n">-40470.860874225</span>,</div><div class="cl" style="top:365.8px;left:380.92px">[<span class="s">"x"</span>] <span class="k">=</span> <span class="n">-121616.23555636</span>,</div><div class="cl" style="top:381.94px;left:380.92px">[<span class="s">"name"</span>] <span class="k">=</span> <span class="s">""</span>,</div><div class="cl" style="top:398.1px;left:380.92px">[<span class="s">"formation_template"</span>] <span class="k">=</span> <span class="s">""</span>,</div><div class="cl" style="top:414.24px;left:380.92px">[<span class="s">"speed_locked"</span>] <span class="k">=</span> <span class="n">true</span>,</div><div class="cl" style="top:430.4px;left:352.4px">}, <span class="c">-- end of [2]</span></div><div class="cl" style="top:446.54px;left:352.4px">[<span class="n">3</span>] <span class="k">=</span></div><div class="cl" style="top:462.7px;left:352.4px">{</div><div class="cl" style="top:478.84px;left:380.92px">[<span class="s">"alt"</span>] <span class="k">=</span> <span class="n">12</span>,</div><div class="cl" style="top:495px;left:380.92px">[<span class="s">"action"</span>] <span class="k">=</span> <span class="s">"Landing"</span>,</div><div class="cl" style="top:511.14px;left:380.92px">[<span class="s">"alt_type"</span>] <span class="k">=</span> <span class="s">"BARO"</span>,</div><div class="cl" style="top:527.3px;left:380.92px">[<span class="s">"speed"</span>] <span class="k">=</span> <span class="n">41.666666666667</span>,</div><div class="cl" style="top:543.44px;left:380.92px">[<span class="s">"task"</span>] <span class="k">=</span></div><div class="cl" style="top:559.6px;left:380.92px">{</div><div class="cl" style="top:575.76px;left:409.44px">[<span class="s">"id"</span>] <span class="k">=</span> <span class="s">"ComboTask"</span>,</div><div class="cl" style="top:591.9px;left:409.44px">[<span class="s">"params"</span>] <span class="k">=</span></div><div class="cl" style="top:608.04px;left:409.44px">{</div><div class="cl" style="top:624.2px;left:437.96px">[<span class="s">"tasks"</span>] <span class="k">=</span></div><div class="cl" style="top:640.34px;left:437.96px">{</div><div class="cl" style="top:656.5px;left:437.96px">}, <span class="c">-- end of ["tasks"]</span></div><div class="cl" style="top:672.64px;left:409.44px">}, <span class="c">-- end of ["params"]</span></div><div class="cl" style="top:688.8px;left:380.92px">}, <span class="c">-- end of ["task"]</span></div><div class="cl" style="top:704.94px;left:380.92px">[<span class="s">"type"</span>] <span class="k">=</span> <span class="s">"Land"</span>,</div><div class="cl" style="top:721.1px;left:380.92px">[<span class="s">"ETA"</span>] <span class="k">=</span> <span class="n">1300.6131869372</span>,</div><div class="cl" style="top:737.24px;left:380.92px">[<span class="s">"ETA_locked"</span>] <span class="k">=</span> <span class="n">false</span>,</div><div class="cl" style="top:753.4px;left:380.92px">[<span class="s">"y"</span>] <span class="k">=</span> <span class="n">-42287.623047</span>,</div><div class="cl" style="top:769.54px;left:380.92px">[<span class="s">"x"</span>] <span class="k">=</span> <span class="n">-131257.175781</span>,</div><div class="cl" style="top:785.7px;left:380.92px">[<span class="s">"name"</span>] <span class="k">=</span> <span class="s">""</span>,</div><div class="cl" style="top:801.84px;left:380.92px">[<span class="s">"formation_template"</span>] <span class="k">=</span> <span class="s">""</span>,</div><div class="cl" style="top:818px;left:380.92px">[<span class="s">"airdromeId"</span>] <span class="k">=</span> <span class="n">6</span>,</div><div class="cl" style="top:834.14px;left:380.92px">[<span class="s">"speed_locked"</span>] <span class="k">=</span> <span class="n">true</span>,</div><div class="cl" style="top:850.3px;left:352.4px">}, <span class="c">-- end of [3]</span></div><div class="cl" style="top:866.44px;left:323.88px">}, <span class="c">-- end of ["points"]</span></div><div class="cl" style="top:882.6px;left:295.36px">}, <span class="c">-- end of ["route"]</span></div><div class="cl" style="top:898.74px;left:295.36px">[<span class="s">"groupId"</span>] <span class="k">=</span> <span class="n">72</span>,</div><div class="cl" style="top:914.9px;left:295.36px">[<span class="s">"hidden"</span>] <span class="k">=</span> <span class="n">false</span>,</div><div class="cl" style="top:931.04px;left:295.36px">[<span class="s">"units"</span>] <span class="k">=</span></div><div class="cl" style="top:947.2px;left:295.36px">{</div><div class="cl" style="top:963.34px;left:323.88px">[<span class="n">1</span>] <span class="k">=</span></div><div class="cl" style="top:979.5px;left:323.88px">{</div><div class="cl" style="top:995.64px;left:352.4px">[<span class="s">"alt"</span>] <span class="k">=</span> <span class="n">152.4</span>,</div><div class="cl" style="top:1011.8px;left:352.4px">[<span class="s">"hardpoint_racks"</span>] <span class="k">=</span> <span class="n">true</span>,</div><div class="cl" style="top:1027.94px;left:352.4px">[<span class="s">"alt_type"</span>] <span class="k">=</span> <span class="s">"BARO"</span>,</div><div id="pm"></div></div><div id="vs"><b></b></div><div id="hs"><b></b></div><div id="corner"></div></div>
</div>

<div id="cp"><b></b><span>#F44336FF</span></div>
<div id="attr"><svg width="14" height="9.2" viewBox="0 0 7 4.6" style="vertical-align:-0.6px"><rect width="7" height="2.3" fill="#4c7be1"/><rect y="2.3" width="7" height="2.3" fill="#ffd500"/></svg> <a>Leaflet</a> | &copy; <a>SkyVector.com</a></div>

</div></div>
</body></html>
